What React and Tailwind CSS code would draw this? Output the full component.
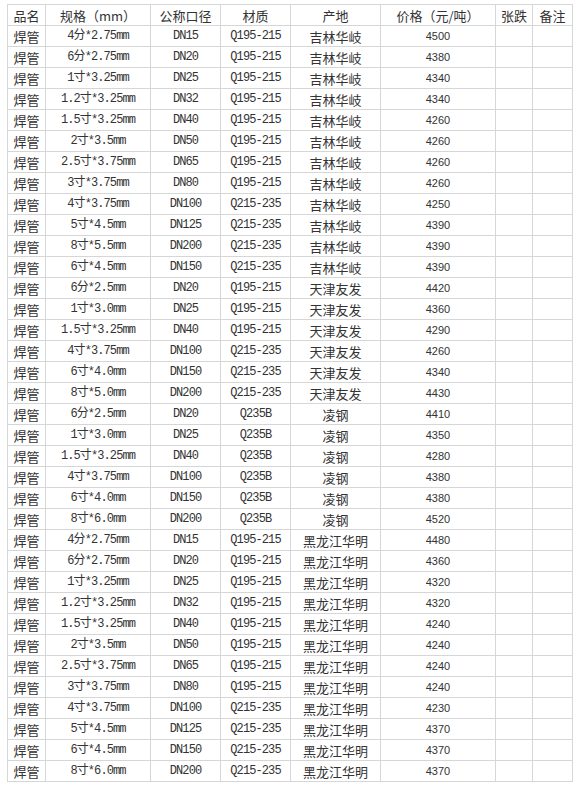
import React from "react";

const rows = [
  ["4分*2.75mm", "DN15", "Q195-215", "吉林华岐", "4500"],
  ["6分*2.75mm", "DN20", "Q195-215", "吉林华岐", "4380"],
  ["1寸*3.25mm", "DN25", "Q195-215", "吉林华岐", "4340"],
  ["1.2寸*3.25mm", "DN32", "Q195-215", "吉林华岐", "4340"],
  ["1.5寸*3.25mm", "DN40", "Q195-215", "吉林华岐", "4260"],
  ["2寸*3.5mm", "DN50", "Q195-215", "吉林华岐", "4260"],
  ["2.5寸*3.75mm", "DN65", "Q195-215", "吉林华岐", "4260"],
  ["3寸*3.75mm", "DN80", "Q195-215", "吉林华岐", "4260"],
  ["4寸*3.75mm", "DN100", "Q215-235", "吉林华岐", "4250"],
  ["5寸*4.5mm", "DN125", "Q215-235", "吉林华岐", "4390"],
  ["8寸*5.5mm", "DN200", "Q215-235", "吉林华岐", "4390"],
  ["6寸*4.5mm", "DN150", "Q215-235", "吉林华岐", "4390"],
  ["6分*2.5mm", "DN20", "Q195-215", "天津友发", "4420"],
  ["1寸*3.0mm", "DN25", "Q195-215", "天津友发", "4360"],
  ["1.5寸*3.25mm", "DN40", "Q195-215", "天津友发", "4290"],
  ["4寸*3.75mm", "DN100", "Q215-235", "天津友发", "4260"],
  ["6寸*4.0mm", "DN150", "Q215-235", "天津友发", "4340"],
  ["8寸*5.0mm", "DN200", "Q215-235", "天津友发", "4430"],
  ["6分*2.5mm", "DN20", "Q235B", "凌钢", "4410"],
  ["1寸*3.0mm", "DN25", "Q235B", "凌钢", "4350"],
  ["1.5寸*3.25mm", "DN40", "Q235B", "凌钢", "4280"],
  ["4寸*3.75mm", "DN100", "Q235B", "凌钢", "4380"],
  ["6寸*4.0mm", "DN150", "Q235B", "凌钢", "4380"],
  ["8寸*6.0mm", "DN200", "Q235B", "凌钢", "4520"],
  ["4分*2.75mm", "DN15", "Q195-215", "黑龙江华明", "4480"],
  ["6分*2.75mm", "DN20", "Q195-215", "黑龙江华明", "4360"],
  ["1寸*3.25mm", "DN25", "Q195-215", "黑龙江华明", "4320"],
  ["1.2寸*3.25mm", "DN32", "Q195-215", "黑龙江华明", "4320"],
  ["1.5寸*3.25mm", "DN40", "Q195-215", "黑龙江华明", "4240"],
  ["2寸*3.5mm", "DN50", "Q195-215", "黑龙江华明", "4240"],
  ["2.5寸*3.75mm", "DN65", "Q195-215", "黑龙江华明", "4240"],
  ["3寸*3.75mm", "DN80", "Q195-215", "黑龙江华明", "4240"],
  ["4寸*3.75mm", "DN100", "Q215-235", "黑龙江华明", "4230"],
  ["5寸*4.5mm", "DN125", "Q215-235", "黑龙江华明", "4370"],
  ["6寸*4.5mm", "DN150", "Q215-235", "黑龙江华明", "4370"],
  ["8寸*6.0mm", "DN200", "Q215-235", "黑龙江华明", "4370"],
];

const cjk = "font-['Noto_Sans_CJK_SC',sans-serif] text-[13px]";
const mono =
  "font-['Liberation_Mono','Noto_Sans_CJK_SC',monospace] text-[12px] tracking-[-0.9px]";
const cell = "h-[21px] border border-[#d6d6d6] p-0 text-center align-middle leading-none";

export default function App() {
  return (
    <div className="min-h-[787px] bg-white pt-[4px] pl-[7px] text-[#333]">
      <table className="w-[565px] table-fixed border-collapse">
        <colgroup>
          <col className="w-[38px]" />
          <col className="w-[105px]" />
          <col className="w-[70px]" />
          <col className="w-[70px]" />
          <col className="w-[90px]" />
          <col className="w-[115px]" />
          <col className="w-[37px]" />
          <col className="w-[40px]" />
        </colgroup>
        <thead>
          <tr>
            {["品名", "规格（mm）", "公称口径", "材质", "产地", "价格（元/吨）", "张跌", "备注"].map((h) => (
              <th key={h} className={`${cell} ${cjk} font-normal`}>
                {h}
              </th>
            ))}
          </tr>
        </thead>
        <tbody>
          {rows.map((r, i) => (
            <tr key={i}>
              <td className={`${cell} ${cjk}`}>焊管</td>
              <td className={`${cell} ${mono}`}>{r[0]}</td>
              <td className={`${cell} ${mono}`}>{r[1]}</td>
              <td className={`${cell} ${mono}`}>{r[2]}</td>
              <td className={`${cell} ${cjk}`}>{r[3]}</td>
              <td className={`${cell} font-['Liberation_Sans',sans-serif] text-[11px]`}>{r[4]}</td>
              <td className={cell}></td>
              <td className={cell}></td>
            </tr>
          ))}
        </tbody>
      </table>
    </div>
  );
}
